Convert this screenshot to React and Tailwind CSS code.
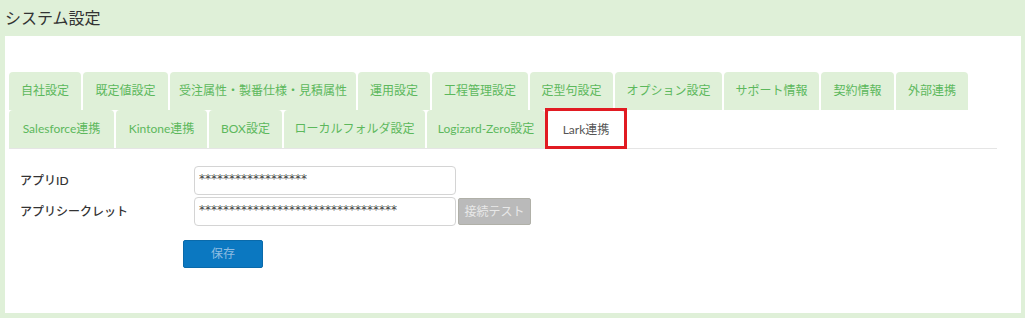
import React from "react";

const rowOne = [
  ["自社設定", 72],
  ["既定値設定", 85],
  ["受注属性・製番仕様・見積属性", 186],
  ["運用設定", 72],
  ["工程管理設定", 96],
  ["定型句設定", 83],
  ["オプション設定", 107],
  ["サポート情報", 95],
  ["契約情報", 73],
  ["外部連携", 72],
];

const rowTwo = [
  ["Salesforce連携", 105],
  ["Kintone連携", 91],
  ["BOX設定", 73],
  ["ローカルフォルダ設定", 141],
  ["Logizard-Zero設定", 118],
];

const font = { fontFamily: "Lato, 'Noto Sans CJK JP', sans-serif" };

function Tab({ label, width }) {
  return (
    <div
      className="h-[38px] flex items-center justify-center rounded-t-[4px] bg-[#dff0d8] text-[12px] text-[#5cb85c] shrink-0"
      style={{ width }}
    >
      {label}
    </div>
  );
}

export default function App() {
  return (
    <div className="w-[1025px] h-[318px] bg-[#dff0d8] flex flex-col" style={font}>
      {/* title bar */}
      <div className="h-[36px] px-[5px] flex items-center text-[16px] text-[#333]">システム設定</div>

      {/* white panel */}
      <div className="flex-1 ml-[5px] mr-[4px] mb-[5px] bg-white pt-[36px] pl-[4px]">
        <div className="w-[988px] flex flex-wrap gap-x-[2px] border-b border-[#e5e5e5]">
          {rowOne.map(([l, w]) => (
            <Tab key={l} label={l} width={w} />
          ))}
          {rowTwo.map(([l, w]) => (
            <Tab key={l} label={l} width={w} />
          ))}
          <div className="relative w-[78px] h-[39px] -mb-px flex items-center justify-center rounded-t-[4px] bg-white border border-[#ddd] border-b-transparent text-[12px] text-[#555]">
            Lark連携
            <span className="absolute -left-[3px] -right-[3px] -top-[3px] -bottom-px border-[3px] border-[#e11b22]" />
          </div>
        </div>

        {/* form */}
        <div className="pl-[11px] pt-[17px]">
          <div className="flex items-center h-[29px]">
            <div className="w-[174px] text-[12px] font-medium text-[#333]">アプリID</div>
            <div
              className="w-[262px] h-[29px] border border-[#d4d4d4] rounded-[4px] px-[4px] pb-[3px] flex items-center text-[12px] text-[#444]"
              style={{ fontFamily: "'DejaVu Sans', sans-serif" }}
            >
              ******************
            </div>
          </div>
          <div className="flex items-center h-[29px] mt-[2px]">
            <div className="w-[174px] text-[12px] font-medium text-[#333]">アプリシークレット</div>
            <div
              className="w-[262px] h-[29px] border border-[#d4d4d4] rounded-[4px] px-[4px] pb-[3px] flex items-center text-[12px] text-[#444]"
              style={{ fontFamily: "'DejaVu Sans', sans-serif" }}
            >
              *********************************
            </div>
            <button className="ml-[2px] w-[73px] h-[27px] rounded-[2px] bg-[#bababa] border border-[#b0b0a8] text-[12px] text-[#e8e8e8]">
              接続テスト
            </button>
          </div>
          <button className="mt-[14px] ml-[163px] w-[80px] h-[28px] rounded-[2px] bg-[#0b78c1] border border-[#0a6aaa] text-[12px] text-[#8fbde2]">
            保存
          </button>
        </div>
      </div>
    </div>
  );
}
